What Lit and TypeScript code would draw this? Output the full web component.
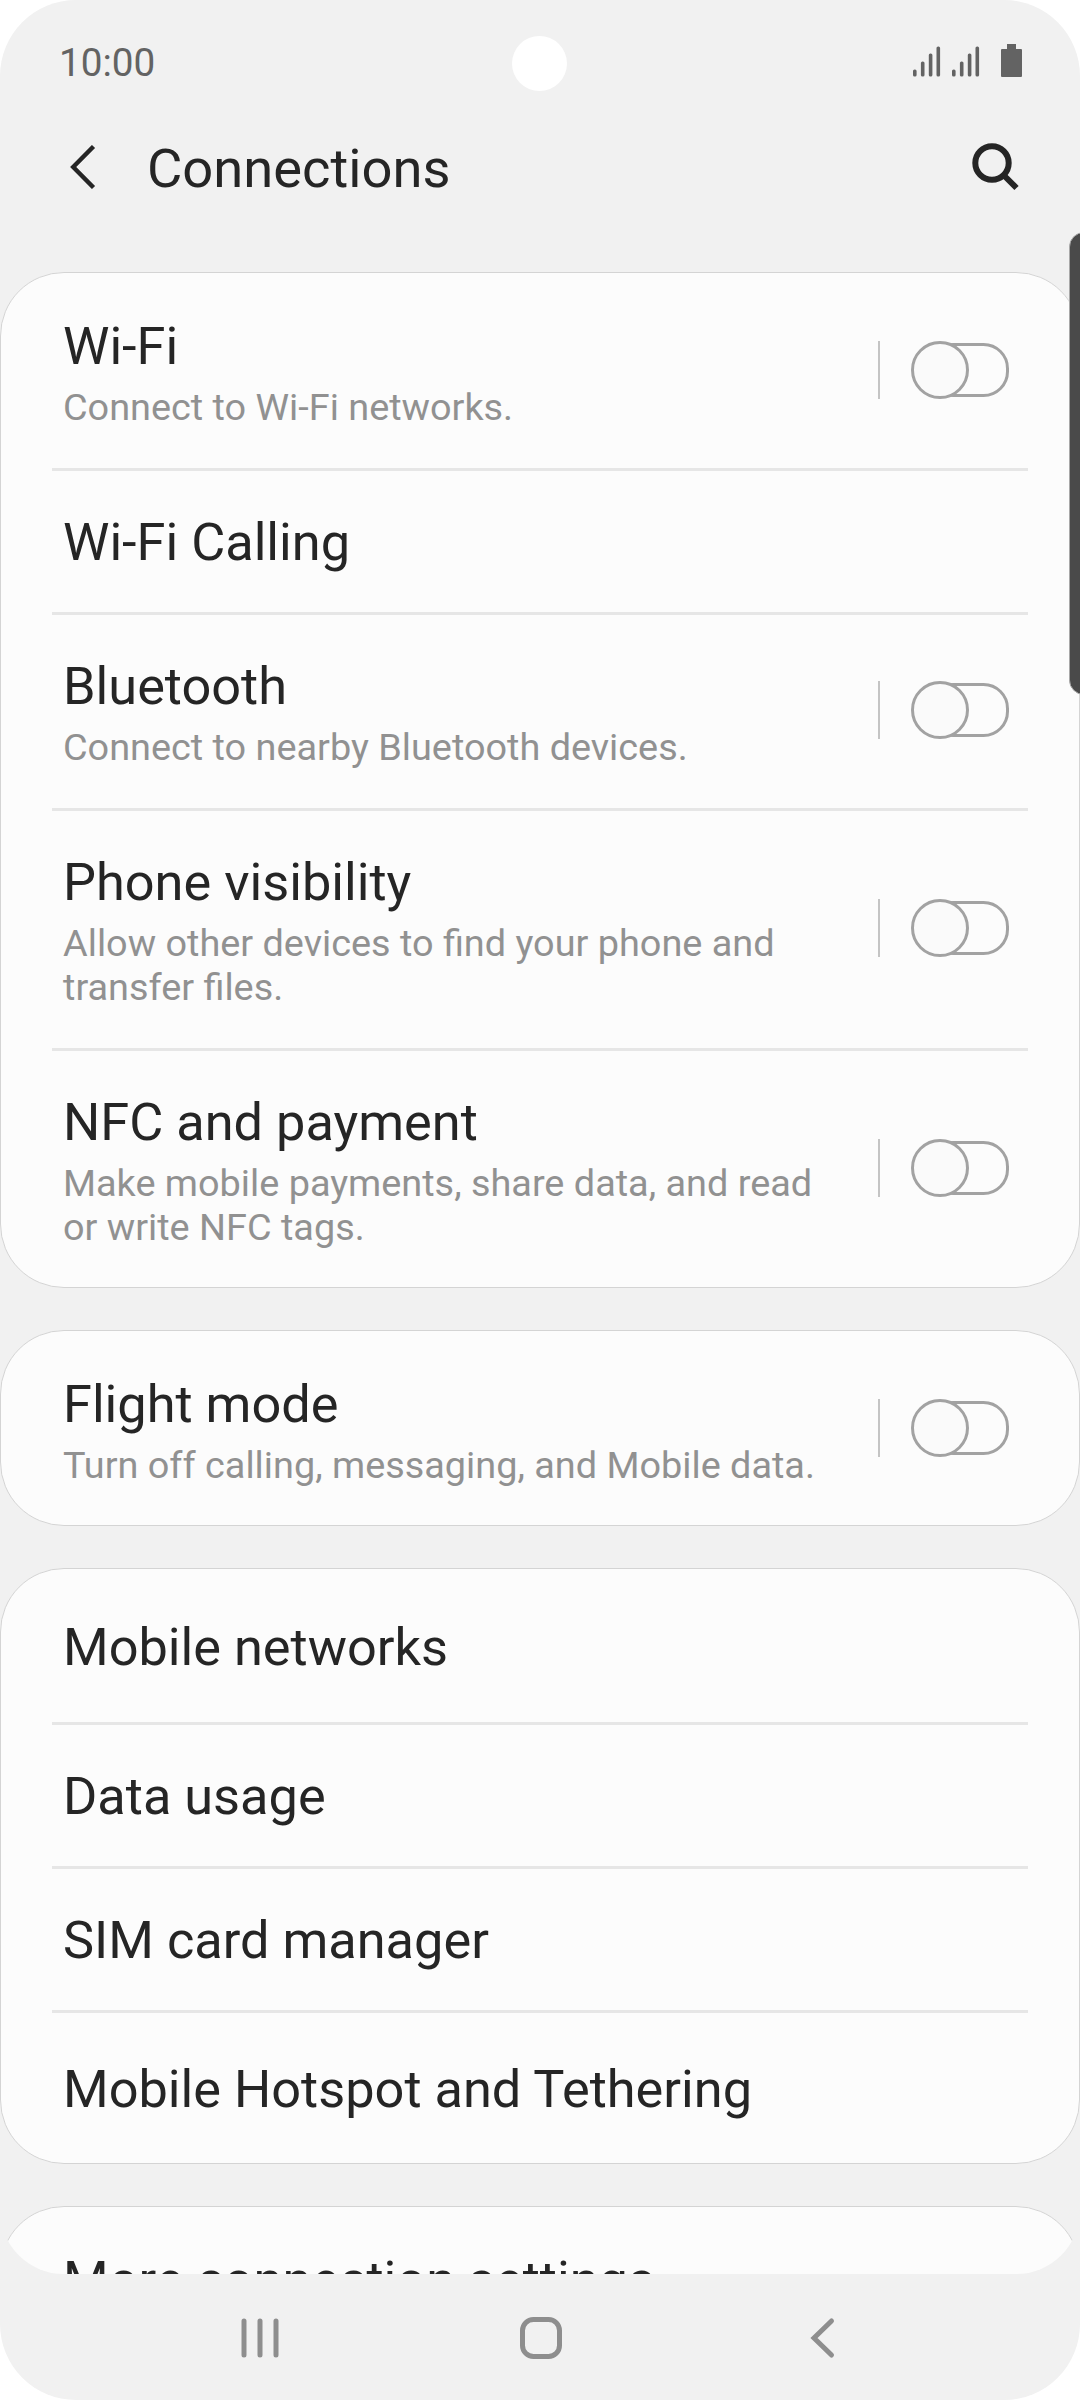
import { LitElement, html, css, svg, nothing } from "lit";
import { customElement, property } from "lit/decorators.js";

interface Item {
  title: string;
  detail?: string;
  toggle?: boolean;
  height: number;
  /** Extra space above the content, for rows at a card's edge. */
  lead?: number;
}

const GROUPS: Item[][] = [
  [
    { title: "Wi-Fi", detail: "Connect to Wi-Fi networks.", toggle: true, height: 195, lead: 2 },
    { title: "Wi-Fi Calling", height: 141 },
    { title: "Bluetooth", detail: "Connect to nearby Bluetooth devices.", toggle: true, height: 193 },
    { title: "Phone visibility", detail: "Allow other devices to find your phone and\ntransfer files.", toggle: true, height: 237 },
    { title: "NFC and payment", detail: "Make mobile payments, share data, and read\nor write NFC tags.", toggle: true, height: 236 },
  ],
  [{ title: "Flight mode", detail: "Turn off calling, messaging, and Mobile data.", toggle: true, height: 194, lead: 2 }],
  [
    { title: "Mobile networks", height: 153, lead: 7 },
    { title: "Data usage", height: 141 },
    { title: "SIM card manager", height: 141 },
    { title: "Mobile Hotspot and Tethering", height: 150, lead: 5 },
  ],
  [{ title: "More connection settings", height: 150, lead: 2 }],
];

@customElement("toggle-switch")
class ToggleSwitch extends LitElement {
  static styles = css`
    :host { display: flex; align-items: center; gap: 31px; }
    .rule { width: 2px; height: 58px; background: #c4c4c4; }
    svg { display: block; }
  `;
  render() {
    return html`<div class="rule"></div>
      <svg width="98" height="58" viewBox="0 0 98 58" stroke="#a2a2a2" stroke-width="3">
        <rect x="18" y="3.5" width="78.5" height="51" rx="24" fill="none"></rect>
        <circle cx="29" cy="29" r="27.5" fill="#fafafa"></circle>
      </svg>`;
  }
}

@customElement("settings-row")
class SettingsRow extends LitElement {
  @property({ attribute: false }) item!: Item;
  static styles = css`
    :host { display: block; }
    .row { display: flex; align-items: flex-start; justify-content: space-between; padding: 0 70px 0 62px; box-sizing: border-box; }
    .text { padding-top: 41px; }
    .title { font-size: 52.3px; line-height: 61px; color: #252525; white-space: nowrap; }
    .detail { margin-top: 8px; font-size: 37.850px; line-height: 44px; color: #919191; white-space: pre; }
    .switch { margin-top: 66px; }
    .switch.tall { margin-top: 88px; }
  `;
  render() {
    const i = this.item;
    const tall = i.detail?.includes("\n") ? "tall" : "";
    return html`<div class="row" style="height:${i.height}px;padding-top:${i.lead ?? 0}px">
      <div class="text">
        <div class="title">${i.title}</div>
        ${i.detail ? html`<div class="detail">${i.detail}</div>` : nothing}
      </div>
      ${i.toggle ? html`<toggle-switch class="switch ${tall}"></toggle-switch>` : nothing}
    </div>`;
  }
}

const bars = (x: number) => svg`
  <rect x=${x} y="23" width="3.6" height="7" rx="1.6"></rect>
  <rect x=${x + 7.9} y="15" width="3.6" height="15" rx="1.6"></rect>
  <rect x=${x + 15.8} y="7" width="3.6" height="23" rx="1.6"></rect>
  <rect x=${x + 23.5} y="0" width="3.6" height="30" rx="1.6"></rect>`;

@customElement("app-root")
class AppRoot extends LitElement {
  static styles = css`
    :host { display: block; width: 1080px; height: 2400px; background: #fff; font-family: Roboto, "Liberation Sans", sans-serif; }
    .screen { position: relative; width: 1080px; height: 2400px; display: flex; flex-direction: column; background: #f1f1f1; border-radius: 76px; overflow: hidden; }
    svg { display: block; }
    .status { height: 124px; box-sizing: border-box; padding: 0 57px 0 59px; display: flex; align-items: center; justify-content: space-between; color: #636363; font-size: 38.700px; }
    .indicators { margin-bottom: 2px; }
    .camera { position: absolute; left: 512px; top: 36px; width: 55px; height: 55px; border-radius: 50%; background: #fff; }
    .header { height: 148px; display: flex; align-items: flex-start; padding: 17px 60px 0 70px; box-sizing: border-box; color: #252525; }
    .back { margin-top: 3.5px; width: 77px; }
    h1 { margin: -3px 0 0; flex: 1; font-size: 54.300px; line-height: 62px; font-weight: 400; }
    .list { height: 2002px; overflow: hidden; display: flex; flex-direction: column; gap: 42px; border-radius: 0 0 64px 64px; }
    .card { flex: none; background: #fcfcfc; border: 1px solid #d4d4d4; border-radius: 64px; overflow: hidden; }
    .divider { height: 3px; margin: 0 51px; background: #e6e6e6; }
    .nav { height: 126px; }
    .edge { position: absolute; left: 1069px; top: 232px; width: 40px; height: 463px; box-sizing: border-box; border: 1.5px solid #a8a8a8; border-radius: 15px; background: #4a4a4a; }
  `;
  render() {
    return html`<div class="screen">
      <div class="status">
        <span>10:00</span>
        <svg class="indicators" width="110" height="34" viewBox="0 0 110 34" fill="#636363">
          <g transform="translate(0 2.5)">${bars(0)}${bars(39)}</g>
          <path d="M94 0h9v5h5q1 0 1 1v26q0 1-1 1h-19q-1 0-1-1v-26q0-1 1-1h5z"></path>
        </svg>
      </div>
      <div class="camera"></div>
      <div class="header">
        <svg class="back" width="77" height="44" viewBox="0 0 77 44" fill="none" stroke="#252525" stroke-width="4.400">
          <path d="M23.5 1.5L3.200 22l20.300 20.500"></path>
        </svg>
        <h1>Connections</h1>
        <svg width="48" height="50" viewBox="0 0 48 50" fill="none" stroke="#252525" stroke-width="6">
          <circle cx="20" cy="22" r="16.700"></circle><path d="M31.500 34L44.500 47"></path>
        </svg>
      </div>
      <div class="list">
        ${GROUPS.map((g) => html`<div class="card">
          ${g.map((item, n) => html`${n ? html`<div class="divider"></div>` : nothing}<settings-row .item=${item}></settings-row>`)}
        </div>`)}
      </div>
      <div class="nav">
        <svg width="1080" height="126" viewBox="0 0 1080 126" fill="none" stroke="#8e8e8e" stroke-width="5" stroke-linecap="round">
          <path d="M244 47v34M260 47v34M276 47v34"></path>
          <rect x="522.500" y="45.500" width="37" height="37" rx="11"></rect>
          <path d="M831.500 47L814 64l17.500 17"></path>
        </svg>
      </div>
      <div class="edge"></div>
    </div>`;
  }
}
